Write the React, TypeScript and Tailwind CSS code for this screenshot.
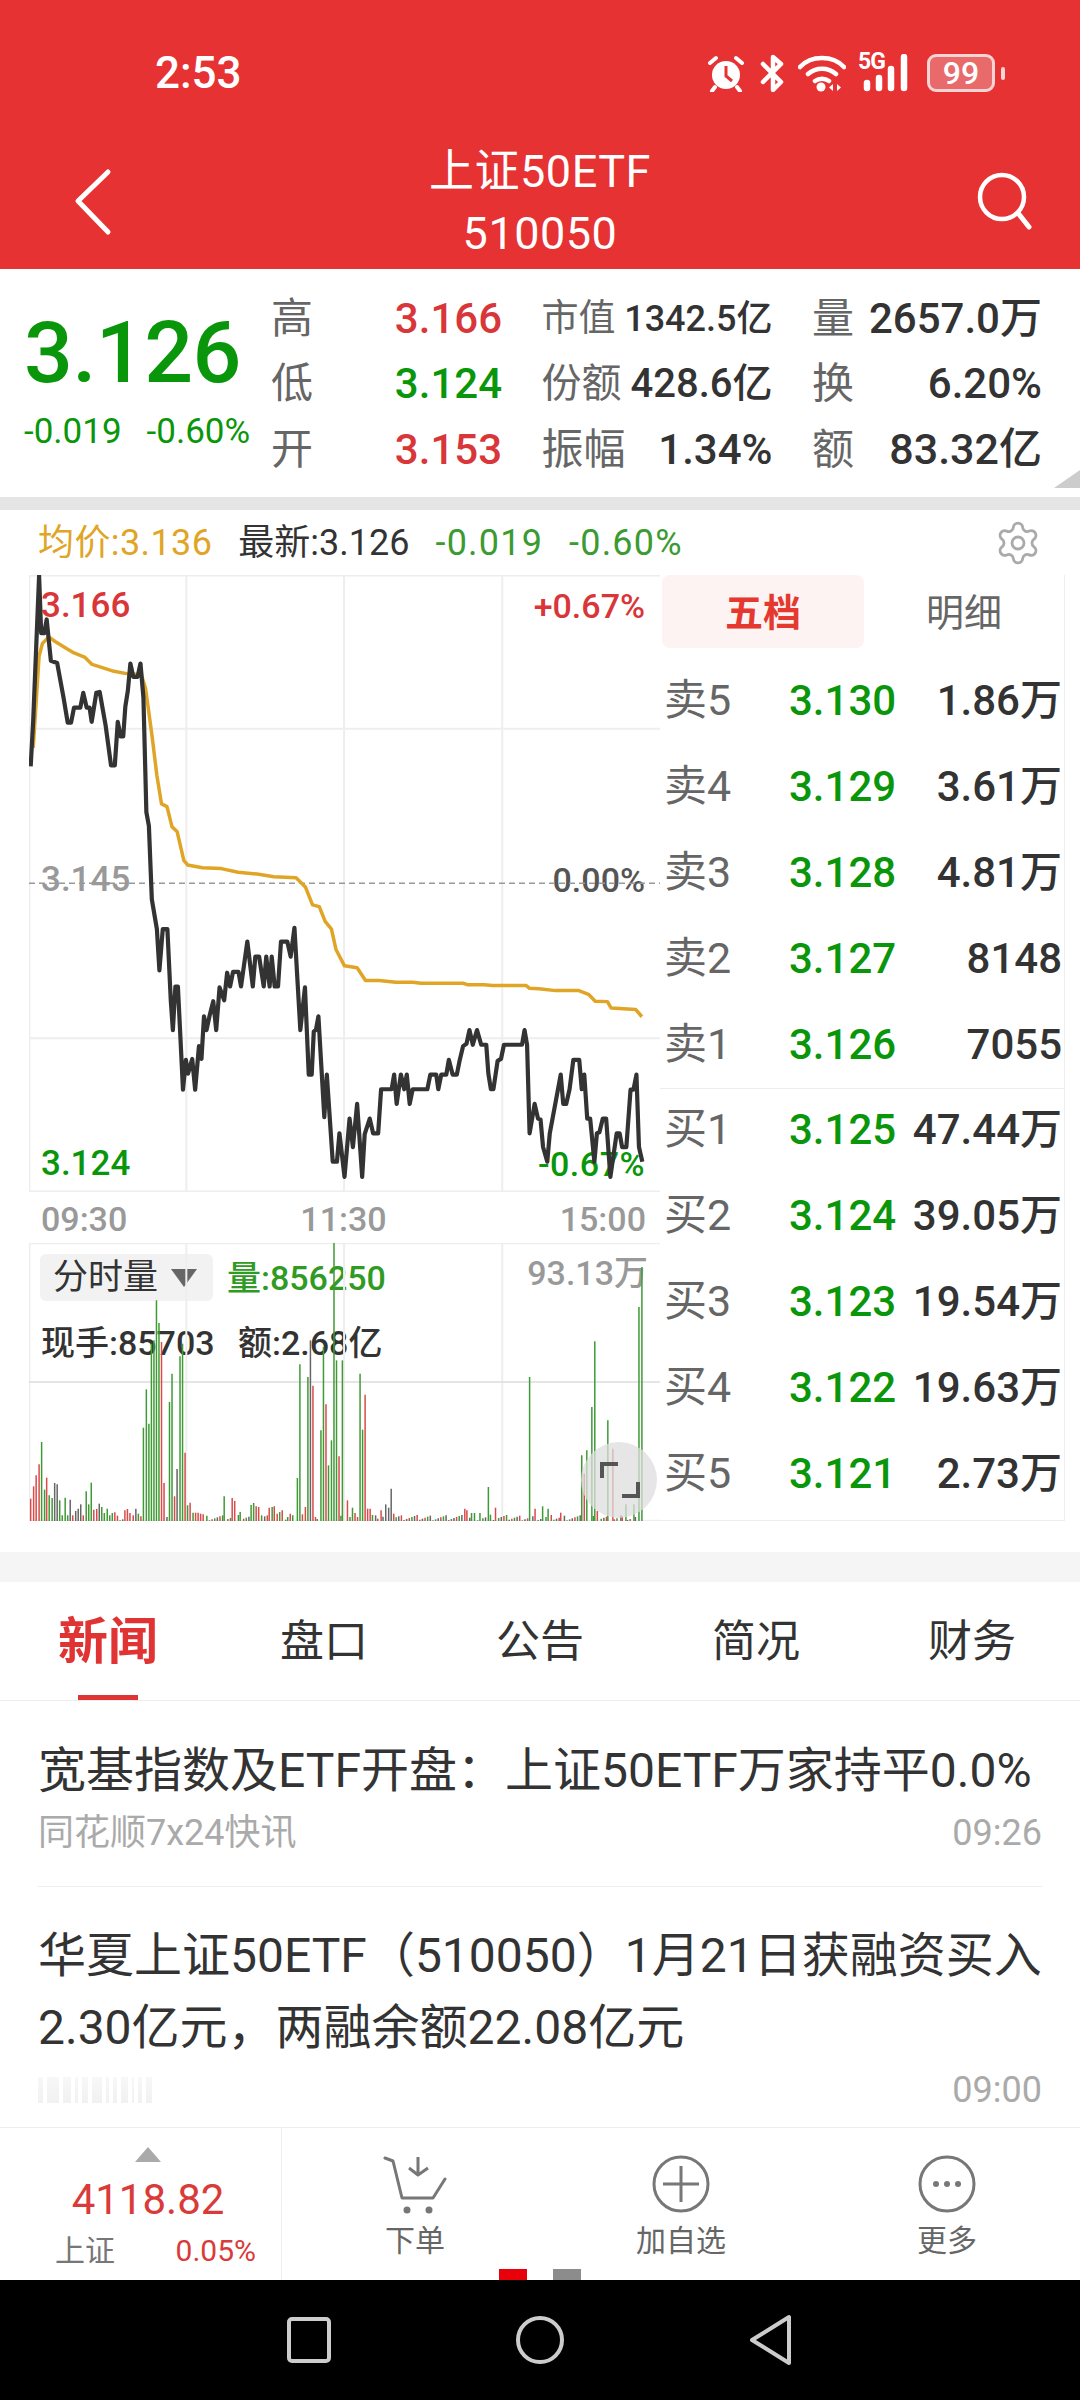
import { Settings } from "lucide-react"

const priceLine =
  "72,580 78,480 92,165 97,290 104,290 110,260 120,350 135,355 150,430 160,485 168,485 175,452 190,452 197,420 205,452 212,452 217,483 228,420 236,418 250,490 263,578 272,578 279,483 286,515 292,515 297,450 303,415 309,356 316,385 326,385 333,356 340,430 347,680 353,710 360,870 372,935 378,1025 386,935 397,935 405,1090 410,1155 416,1060 422,1060 434,1285 441,1220 446,1250 456,1218 463,1285 472,1190 478,1218 484,1125 490,1155 497,1125 506,1092 513,1155 521,1062 532,1090 539,1030 546,1060 553,1028 566,1028 572,1060 587,962 600,1060 606,995 615,995 626,1060 632,995 640,1060 645,995 652,1060 660,1060 667,962 682,962 690,995 699,932 713,1155 724,1062 733,1252 740,1252 745,1158 750,1155 756,1125 770,1345 776,1252 790,1442 800,1442 806,1380 818,1475 830,1348 838,1410 848,1316 860,1475 866,1382 878,1348 886,1380 898,1380 905,1284 930,1284 936,1252 942,1316 952,1252 960,1284 966,1252 973,1316 980,1284 1015,1284 1022,1252 1036,1252 1041,1284 1048,1252 1060,1252 1066,1220 1075,1252 1085,1252 1092,1220 1100,1190 1108,1185 1115,1155 1123,1187 1133,1155 1143,1187 1155,1187 1160,1250 1166,1284 1172,1284 1182,1222 1190,1218 1197,1187 1240,1187 1246,1155 1252,1187 1258,1380 1270,1316 1278,1348 1284,1350 1290,1410 1300,1442 1306,1380 1332,1252 1338,1316 1345,1316 1353,1284 1362,1220 1376,1220 1382,1284 1388,1252 1395,1348 1402,1348 1412,1442 1418,1380 1424,1378 1432,1348 1440,1348 1450,1475 1465,1380 1472,1380 1478,1410 1488,1410 1498,1285 1505,1285 1512,1252 1518,1410 1526,1442"

const avgLine =
  "78,540 85,440 92,340 100,312 115,298 130,308 160,325 175,333 200,342 218,358 270,373 300,378 335,380 345,410 360,510 372,600 383,662 396,668 408,712 420,722 436,785 445,795 480,801 525,803 565,811 610,815 650,821 703,823 725,843 742,882 758,886 772,918 787,935 798,980 818,1015 848,1019 868,1047 900,1047 940,1051 980,1051 1000,1053 1100,1053 1110,1056 1150,1056 1170,1058 1250,1058 1258,1064 1280,1065 1320,1069 1375,1069 1398,1077 1414,1092 1443,1093 1452,1107 1510,1110 1525,1126"

const BAR_COLORS: Record<string, string> = { g: "#3f9a36", r: "#d94a4a", k: "#666666" }

// x, top of bar, colour (traced, everything else is a low bar)
const tallBars: [number, number, string][] = [
  [72, 895, "r"], [79, 858, "r"], [85, 825, "r"], [92, 792, "r"], [98, 725, "g"], [105, 868, "g"], [110, 832, "r"], [116, 885, "g"],
  [123, 893, "g"], [129, 848, "k"], [135, 852, "k"], [141, 900, "g"], [147, 945, "g"], [154, 892, "g"], [160, 945, "g"], [166, 898, "k"],
  [172, 945, "r"], [179, 932, "k"], [185, 925, "k"], [191, 912, "k"], [197, 945, "r"], [204, 873, "g"], [210, 912, "g"], [216, 847, "g"],
  [222, 928, "r"], [229, 926, "r"], [235, 910, "k"], [241, 920, "g"], [247, 938, "g"], [254, 925, "g"], [260, 945, "g"], [266, 938, "g"],
  [272, 936, "r"], [296, 930, "r"], [302, 926, "r"], [308, 938, "r"], [322, 925, "k"], [328, 940, "g"], [334, 948, "r"],
  [340, 682, "g"], [347, 567, "g"], [353, 670, "g"], [359, 430, "g"], [365, 420, "g"], [371, 300, "g"], [377, 368, "g"], [383, 425, "r"],
  [389, 848, "r"], [396, 950, "k"], [402, 605, "g"], [408, 520, "g"], [414, 888, "r"], [420, 806, "k"], [427, 468, "g"], [433, 430, "g"],
  [439, 757, "r"], [445, 915, "g"], [451, 907, "r"], [458, 937, "g"], [464, 937, "r"], [470, 937, "r"], [476, 940, "r"], [482, 942, "r"],
  [532, 888, "g"], [551, 893, "r"], [557, 902, "r"], [570, 935, "g"], [596, 914, "g"], [602, 908, "g"], [608, 918, "r"], [614, 920, "r"],
  [621, 945, "g"], [639, 922, "r"], [646, 920, "g"], [651, 918, "r"], [658, 940, "r"], [664, 935, "g"], [670, 930, "r"], [674, 845, "k"],
  [683, 950, "g"], [689, 940, "r"], [695, 945, "g"], [706, 833, "g"], [712, 492, "g"], [718, 942, "r"], [725, 920, "r"], [731, 530, "g"],
  [737, 420, "k"], [743, 556, "r"], [749, 950, "r"], [762, 690, "g"], [768, 440, "g"], [774, 612, "r"], [780, 795, "g"], [787, 720, "g"],
  [793, 128, "g"], [799, 480, "g"], [805, 768, "r"], [813, 480, "g"], [825, 900, "r"], [831, 950, "g"], [837, 922, "g"], [843, 938, "r"],
  [849, 950, "r"], [855, 520, "g"], [861, 688, "g"], [867, 583, "r"], [873, 925, "r"], [879, 925, "r"], [892, 945, "k"], [905, 930, "r"],
  [916, 912, "k"], [923, 922, "k"], [929, 865, "k"], [935, 940, "r"], [1104, 925, "r"], [1109, 930, "r"], [1120, 938, "g"], [1127, 938, "g"],
  [1140, 938, "g"], [1160, 860, "g"], [1165, 943, "g"], [1177, 922, "r"], [1258, 530, "g"], [1271, 925, "r"], [1289, 918, "g"], [1302, 925, "g"],
  [1332, 937, "r"], [1382, 765, "g"], [1388, 820, "r"], [1394, 750, "g"], [1400, 740, "g"], [1406, 620, "g"], [1413, 423, "g"], [1419, 932, "r"],
  [1444, 660, "g"], [1450, 437, "g"], [1456, 745, "r"], [1475, 945, "k"], [1487, 912, "g"], [1506, 912, "g"], [1518, 320, "g"], [1525, 200, "g"],
]

const volumeBars = Array.from({ length: 233 }, (_, i) => {
  const x = 72 + i * 6.25
  const hit = tallBars.find((b) => Math.abs(b[0] - x) < 3.2)
  if (hit) return { x: hit[0], top: hit[1], color: BAR_COLORS[hit[2]] }
  const kinds = ["r", "g", "k"]
  return { x, top: 960 - ((i * 37) % 17), color: BAR_COLORS[kinds[(i * 7) % 3]] }
})

const asks = [
  ["卖5", "3.130", "1.86万"],
  ["卖4", "3.129", "3.61万"],
  ["卖3", "3.128", "4.81万"],
  ["卖2", "3.127", "8148"],
  ["卖1", "3.126", "7055"],
]
const bids = [
  ["买1", "3.125", "47.44万"],
  ["买2", "3.124", "39.05万"],
  ["买3", "3.123", "19.54万"],
  ["买4", "3.122", "19.63万"],
  ["买5", "3.121", "2.73万"],
]

function StatusIcons() {
  return (
    <div className="flex items-center h-[40px]">
      <svg width="38" height="38" viewBox="0 0 38 38" className="shrink-0">
        <circle cx="19" cy="21" r="14" fill="#fff" />
        <path d="M19 12v10l6 5" fill="none" stroke="#e63232" strokeWidth="3" />
        <path d="M3 9l6-5M35 9l-6-5M8 33l-3 4M30 33l3 4" stroke="#fff" strokeWidth="4" strokeLinecap="round" />
      </svg>
      <svg width="24" height="38" viewBox="0 0 24 38" className="ml-[15px] shrink-0">
        <path d="M3 10l18 18-8 8V3l8 7-18 18" fill="none" stroke="#fff" strokeWidth="4.500" strokeLinejoin="round" strokeLinecap="round" />
      </svg>
      <svg width="48" height="38" viewBox="0 0 48 38" className="ml-[14px] shrink-0">
        <path d="M2 13C13 1 35 1 46 13M10 20c8-7 20-7 28 0M17 27c4-3 10-3 14 0" fill="none" stroke="#fff" strokeWidth="4.500" strokeLinecap="round" />
        <circle cx="23" cy="33" r="4.500" fill="#fff" />
        <path d="M35 30v7l-4-3.500zM39 30v7l4-3.500z" fill="#fff" />
      </svg>
      <div className="relative w-[53px] h-[38px] ml-[14px] shrink-0">
        <span className="absolute left-[-2px] top-[-4px] text-[23px] leading-[24px] font-bold text-white tracking-[-1px]">5G</span>
        <svg width="50" height="38" viewBox="0 0 50 38" className="absolute left-[3px] top-0">
          <path d="M4 29v5M16 24v10M28 15v19M41 3v31" stroke="#fff" strokeWidth="6.500" strokeLinecap="round" />
        </svg>
      </div>
      <div className="relative w-[68px] h-[38px] ml-[14px] rounded-[9px] border-[3px] border-[#f7d4d4] bg-[#e96a6a] flex items-center justify-center shrink-0">
        <span className="text-[32px] leading-[32px] font-medium text-white">99</span>
      </div>
      <div className="w-[4px] h-[13px] ml-[6px] rounded-[2px] bg-[#f7d4d4] shrink-0" />
    </div>
  )
}

function QuoteCell({ label, value, labelClass, valueClass }: { label: string; value: string; labelClass: string; valueClass: string }) {
  return (
    <div className="flex items-center justify-between whitespace-nowrap">
      <span className={`text-[#666666] ${labelClass}`}>{label}</span>
      <span className={valueClass}>{value}</span>
    </div>
  )
}

function BookRow({ row }: { row: string[] }) {
  return (
    <div className="h-[86px] flex items-center pl-[4px] pr-[2px] whitespace-nowrap">
      <span className="w-[125px] text-[43px] text-[#666666]">{row[0]}</span>
      <span className="w-[115px] text-[42px] font-medium text-[#0a960a]">{row[1]}</span>
      <span className="flex-1 text-right text-[42px] font-medium text-[#333333]">{row[2]}</span>
    </div>
  )
}

function PriceChart() {
  return (
    <div className="relative h-[617px] whitespace-nowrap">
      <span className="absolute left-[12px] top-[13px] text-[35px] leading-[36px] font-medium text-[#d9363a]">3.166</span>
      <span className="absolute right-[15px] top-[13px] text-[34px] leading-[36px] font-medium text-[#d9363a]">+0.67%</span>
      <span className="absolute left-[12px] top-[287px] text-[35px] leading-[36px] font-medium text-[#999999]">3.145</span>
      <span className="absolute right-[15px] top-[287px] text-[34px] leading-[36px] font-medium text-[#555555]">0.00%</span>
      <span className="absolute left-[12px] top-[571px] text-[35px] leading-[36px] font-medium text-[#0a960a]">3.124</span>
      <span className="absolute right-[15px] top-[571px] text-[34px] leading-[36px] font-medium text-[#0a960a] tracking-[0.5px]">-0.67%</span>
      <svg viewBox="68 163 1500 1345" preserveAspectRatio="none" className="absolute inset-0 w-full h-full">
        <g stroke="#eeeeee" strokeWidth="2" fill="none">
          <path vectorEffect="non-scaling-stroke" d="M69 163V1508M442 163V1508M817 163V1508M1193 163V1508M68 164H1568M68 498H1568M68 1173H1568M68 1507H1568" />
        </g>
        <path vectorEffect="non-scaling-stroke" d="M68 835H1568" stroke="#999999" strokeWidth="1.500" strokeDasharray="6 4" fill="none" />
        <polyline vectorEffect="non-scaling-stroke" points={avgLine} stroke="#e0a526" strokeWidth="3.500" fill="none" strokeLinejoin="round" />
        <polyline vectorEffect="non-scaling-stroke" points={priceLine} stroke="#333333" strokeWidth="4.200" fill="none" strokeLinejoin="round" />
      </svg>
    </div>
  )
}

function VolumeChart() {
  return (
    <div className="relative h-[278px] whitespace-nowrap">
      <div className="absolute left-[11px] top-[11px] w-[173px] h-[47px] rounded-[6px] bg-[#f2f2f2] flex items-center pl-[13px]">
        <span className="text-[35px] leading-[40px] text-[#333333]">分时量</span>
        <svg width="26" height="18" viewBox="0 0 26 18" className="ml-[13px]">
          <path d="M0 0h26L13 18z" fill="#666666" />
        </svg>
      </div>
      <span className="absolute left-[198px] top-[15px] text-[34px] leading-[40px] font-medium text-[#2f9a24]">量:856250</span>
      <span className="absolute right-[12px] top-[10px] text-[34px] leading-[40px] font-medium text-[#999999]">93.13万</span>
      <span className="absolute left-[12px] top-[80px] text-[34px] leading-[40px] font-medium text-[#333333]">现手:85703</span>
      <span className="absolute left-[209px] top-[80px] text-[34px] leading-[40px] font-medium text-[#333333]">额:2.68亿</span>
      <svg viewBox="68 128 1500 834" preserveAspectRatio="none" className="absolute inset-0 w-full h-full">
        <path vectorEffect="non-scaling-stroke" d="M69 128V962M442 128V962M817 128V962M1193 128V962M68 129H1568M68 961H1568" stroke="#eeeeee" strokeWidth="2" fill="none" />
        <path vectorEffect="non-scaling-stroke" d="M68 545H1568" stroke="#dddddd" strokeWidth="1.500" fill="none" />
        {volumeBars.map((b, i) => (
          <line key={i} vectorEffect="non-scaling-stroke" x1={b.x} x2={b.x} y1={b.top} y2={962} stroke={b.color} strokeWidth="1.500" />
        ))}
      </svg>
      <div className="absolute left-[552px] top-[199px] w-[76px] h-[76px] rounded-full bg-[#dddddd]/75" />
      <svg width="40" height="36" viewBox="0 0 40 36" className="absolute left-[571px] top-[219px]">
        <path d="M2 16V2h16M38 20v14H22" fill="none" stroke="#555555" strokeWidth="4" />
      </svg>
    </div>
  )
}

export default function App() {
  return (
    <div className="w-[1080px] h-[2400px] overflow-hidden bg-white font-['Roboto','Noto_Sans_CJK_SC',sans-serif] flex flex-col">
      {/* Status bar + title */}
      <header className="h-[269px] bg-[#e63232] text-white shrink-0">
        <div className="h-[78px] pt-[34px] box-content mb-[29px] pl-[155px] pr-[75px] flex items-center justify-between">
          <span className="text-[44px] font-medium leading-none">2:53</span>
          <StatusIcons />
        </div>
        <div className="h-[122px] grid grid-cols-[1fr_auto_1fr] items-center">
          <svg width="44" height="68" viewBox="0 0 44 68" className="ml-[70px] -mt-[2px]">
            <path d="M38 4L8 33l30 31" fill="none" stroke="#fff" strokeWidth="5" strokeLinecap="round" strokeLinejoin="round" />
          </svg>
          <div className="text-center text-[45px] leading-[62px] tracking-[0.5px]">
            <div>上证50ETF</div>
            <div>510050</div>
          </div>
          <svg width="60" height="60" viewBox="0 0 60 60" className="justify-self-end mr-[46px] -mt-[2px]">
            <circle cx="28" cy="25" r="22" fill="none" stroke="#fff" strokeWidth="4.500" />
            <path d="M44 41l11 14" stroke="#fff" strokeWidth="5" strokeLinecap="round" />
          </svg>
        </div>
      </header>

      {/* Quote summary */}
      <section className="relative h-[228px] flex shrink-0 whitespace-nowrap">
        <div className="w-[272px] pl-[24px] pt-[34px] shrink-0">
          <div className="text-[86px] leading-[100px] font-medium text-[#0a960a] tracking-[-0.5px]">3.126</div>
          <div className="flex gap-[25px] mt-[9px] text-[35px] leading-[40px] text-[#0a960a]">
            <span>-0.019</span>
            <span>-0.60%</span>
          </div>
        </div>
        <div className="w-[770px] h-[196px] mt-[17px] grid grid-cols-[230px_231px_230px] gap-x-[39.500px] grid-rows-3">
          <QuoteCell label="高" labelClass="text-[42px] -ml-[1px]" value="3.166" valueClass="text-[42px] font-medium text-[#d9363a]" />
          <QuoteCell label="市值" labelClass="text-[37px]" value="1342.5亿" valueClass="text-[36px] font-medium text-[#333333]" />
          <QuoteCell label="量" labelClass="text-[42px]" value="2657.0万" valueClass="text-[42px] font-medium text-[#333333]" />
          <QuoteCell label="低" labelClass="text-[42px] -ml-[1px]" value="3.124" valueClass="text-[42px] font-medium text-[#0a960a]" />
          <QuoteCell label="份额" labelClass="text-[40px]" value="428.6亿" valueClass="text-[40px] font-medium text-[#333333]" />
          <QuoteCell label="换" labelClass="text-[42px]" value="6.20%" valueClass="text-[42px] font-medium text-[#333333]" />
          <QuoteCell label="开" labelClass="text-[42px] -ml-[1px]" value="3.153" valueClass="text-[42px] font-medium text-[#d9363a]" />
          <QuoteCell label="振幅" labelClass="text-[42px]" value="1.34%" valueClass="text-[42px] font-medium text-[#333333]" />
          <QuoteCell label="额" labelClass="text-[42px]" value="83.32亿" valueClass="text-[43px] font-medium text-[#333333]" />
        </div>
        <svg width="26" height="18" viewBox="0 0 26 18" className="absolute right-0 top-[201px]">
          <path d="M26 0v18H0z" fill="#cccccc" />
        </svg>
      </section>
      <div className="h-[13px] bg-[#e5e5e5] shrink-0" />

      {/* Intraday header */}
      <div className="h-[65px] flex items-center pl-[38px] pr-[38px] text-[36px] whitespace-nowrap shrink-0">
        <span className="text-[#e0a526] tracking-[0.4px]">均价:3.136</span>
        <span className="ml-[26px] text-[#333333]">最新:3.126</span>
        <span className="ml-[26px] text-[#3c9a32] tracking-[1.2px]">-0.019</span>
        <span className="ml-[26px] text-[#3c9a32] tracking-[1.200px]">-0.60%</span>
        <Settings size={48} strokeWidth={1.4} className="ml-auto text-[#aaaaaa]" />
      </div>

      {/* Charts and order book */}
      <div className="h-[946px] flex shrink-0">
        <div className="w-[631px] ml-[29px] shrink-0">
          <PriceChart />
          <div className="h-[51px] pt-[3px] flex items-center justify-between pl-[12px] pr-[14px] text-[34px] font-medium text-[#999999]">
            <span>09:30</span>
            <span>11:30</span>
            <span>15:00</span>
          </div>
          <VolumeChart />
        </div>
        <div className="w-[405px] h-[946px] border-r border-b border-[#eeeeee] shrink-0">
          <div className="h-[73px] flex whitespace-nowrap">
            <div className="w-[202px] ml-[2px] pt-[3px] rounded-[8px] bg-[#fdf3f2] flex items-center justify-center text-[38px] font-bold text-[#e5392f]">五档</div>
            <div className="flex-1 pt-[3px] flex items-center justify-center text-[38px] text-[#666666]">明细</div>
          </div>
          <div className="h-[441px] pt-[9px] border-b border-[#eeeeee]">
            {asks.map((row) => (
              <BookRow key={row[0]} row={row} />
            ))}
          </div>
          <div className="-mt-[3px]">
            {bids.map((row) => (
              <BookRow key={row[0]} row={row} />
            ))}
          </div>
        </div>
      </div>

      <div className="h-[31px] shrink-0" />
      <div className="h-[30px] bg-[#f5f5f5] shrink-0" />

      {/* Tabs */}
      <nav className="h-[119px] grid grid-cols-5 border-b border-[#eeeeee] shrink-0">
        <div className="relative pt-[2px] flex items-center justify-center text-[50px] font-bold text-[#e03434]">
          新闻
          <div className="absolute bottom-0 left-[78px] w-[60px] h-[5px] bg-[#e03434]" />
        </div>
        {["盘口", "公告", "简况", "财务"].map((t) => (
          <div key={t} className="pt-[2px] flex items-center justify-center text-[44px] text-[#333333]">
            {t}
          </div>
        ))}
      </nav>

      {/* News */}
      <div className="flex-1 px-[38px] overflow-hidden">
        <div className="pt-[34px] pb-[27px] border-b border-[#eeeeee]">
          <div className="text-[48px] leading-[72px] text-[#333333] whitespace-nowrap">宽基指数及ETF开盘：上证50ETF万家持平0.0%</div>
          <div className="h-[52px] flex items-center justify-between text-[#aaaaaa] text-[36px]">
            <span>同花顺7x24快讯</span>
            <span className="text-[36px]">09:26</span>
          </div>
        </div>
        <div className="pt-[33px]">
          <div className="text-[48px] leading-[72px] text-[#333333] whitespace-nowrap">华夏上证50ETF（510050）1月21日获融资买入</div>
          <div className="text-[48px] leading-[72px] text-[#333333] whitespace-nowrap">2.30亿元，两融余额22.08亿元</div>
          <div className="h-[52px] flex items-center justify-between text-[#aaaaaa]">
            <div className="flex gap-[4px] h-[26px] opacity-40">
              {[5, 12, 8, 3, 6, 10, 3, 4, 7, 2, 4, 6].map((w, i) => (
                <div key={i} className="bg-gradient-to-b from-[#eeeeee] to-[#dddddd]" style={{ width: w }} />
              ))}
            </div>
            <span className="text-[36px]">09:00</span>
          </div>
        </div>
      </div>

      {/* Bottom toolbar */}
      <footer className="relative h-[153px] flex border-t border-[#eeeeee] shrink-0 whitespace-nowrap">
        <div className="w-[282px] border-r border-[#eeeeee] flex flex-col items-center pt-[19px] shrink-0">
          <svg width="26" height="15" viewBox="0 0 26 15" className="ml-[15px]">
            <path d="M13 0l13 15H0z" fill="#aaaaaa" />
          </svg>
          <div className="mt-[15px] ml-[15px] text-[42px] leading-[46px] text-[#d93a3a]">4118.82</div>
          <div className="mt-[10px] w-full flex justify-between pl-[55px] pr-[25px] text-[30px] leading-[36px]">
            <span className="text-[#777777]">上证</span>
            <span className="text-[#d93a3a]">0.05%</span>
          </div>
        </div>
        <div className="flex-1 flex flex-col items-center pt-[27px]">
          <svg width="64" height="60" viewBox="0 0 64 60">
            <path d="M2 3l8 3 9 37h31l12-19" fill="none" stroke="#777777" strokeWidth="3" strokeLinejoin="round" strokeLinecap="round" />
            <path d="M35 2v18M26 13l9 7 10-7" fill="none" stroke="#777777" strokeWidth="3" strokeLinejoin="round" />
            <circle cx="24" cy="55" r="3.500" fill="#777777" />
            <circle cx="46" cy="55" r="3.500" fill="#777777" />
          </svg>
          <span className="mt-[8px] text-[30px] leading-[36px] text-[#666666]">下单</span>
        </div>
        <div className="flex-1 flex flex-col items-center pt-[26px]">
          <svg width="60" height="60" viewBox="0 0 60 60">
            <circle cx="30" cy="30" r="27" fill="none" stroke="#777777" strokeWidth="3" />
            <path d="M30 12v36M12 30h36" stroke="#777777" strokeWidth="3" />
          </svg>
          <span className="mt-[9px] text-[30px] leading-[36px] text-[#666666]">加自选</span>
        </div>
        <div className="flex-1 flex flex-col items-center pt-[26px]">
          <svg width="60" height="60" viewBox="0 0 60 60">
            <circle cx="30" cy="30" r="27" fill="none" stroke="#777777" strokeWidth="3" />
            <circle cx="19" cy="30" r="3" fill="#777777" />
            <circle cx="30" cy="30" r="3" fill="#777777" />
            <circle cx="41" cy="30" r="3" fill="#777777" />
          </svg>
          <span className="mt-[9px] text-[30px] leading-[36px] text-[#666666]">更多</span>
        </div>
        <div className="absolute left-[499px] bottom-0 w-[28px] h-[11px] bg-[#e8000b]" />
        <div className="absolute left-[553px] bottom-0 w-[28px] h-[11px] bg-[#8c8c8c]" />
      </footer>

      {/* Android nav bar */}
      <div className="h-[120px] bg-black flex items-center shrink-0">
        <svg width="48" height="48" viewBox="0 0 48 48" className="ml-[285px]">
          <rect x="4" y="3" width="40" height="42" rx="3" fill="none" stroke="#cccccc" strokeWidth="4" />
        </svg>
        <svg width="50" height="50" viewBox="0 0 50 50" className="ml-[182px]">
          <circle cx="25" cy="25" r="22" fill="none" stroke="#cccccc" strokeWidth="4" />
        </svg>
        <svg width="46" height="52" viewBox="0 0 46 52" className="ml-[183px]">
          <path d="M41 3v46L4 26z" fill="none" stroke="#cccccc" strokeWidth="4" strokeLinejoin="round" />
        </svg>
      </div>
    </div>
  )
}
